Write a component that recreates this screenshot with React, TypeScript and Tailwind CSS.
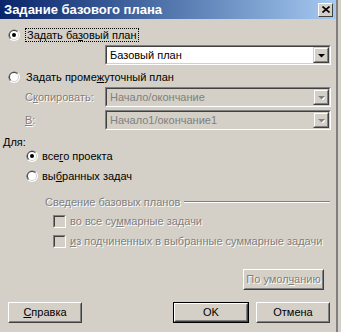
import React from "react";

function Radio({ checked }: { checked?: boolean }) {
  return (
    <svg width="12" height="12" viewBox="0 0 12 12" className="shrink-0">
      <circle cx="6" cy="6" r="6" fill="#ffffff" />
      <path d="M1.76 10.24 A6 6 0 0 1 10.24 1.76 Z" fill="#808080" />
      <circle cx="6" cy="6" r="5" fill="#d4d0c8" />
      <path d="M2.46 9.54 A5 5 0 0 1 9.54 2.46 Z" fill="#404040" />
      <circle cx="6" cy="6" r="4" fill="#ffffff" />
      {checked && <circle cx="6" cy="6" r="2" fill="#000000" />}
    </svg>
  );
}

function Checkbox() {
  return (
    <span className="block w-[13px] h-[13px] shrink-0 border border-t-[#808080] border-l-[#808080] border-b-white border-r-white">
      <span className="block w-full h-full border border-t-[#404040] border-l-[#404040] border-b-[#d4d0c8] border-r-[#d4d0c8] bg-[#d4d0c8]" />
    </span>
  );
}

function Combo({ value, disabled }: { value: string; disabled?: boolean }) {
  return (
    <div className="w-[226px] h-[20px] shrink-0 border border-t-[#808080] border-l-[#808080] border-b-white border-r-white">
      <div
        className={`flex h-full border border-t-[#404040] border-l-[#404040] border-b-[#d4d0c8] border-r-[#d4d0c8] ${
          disabled ? "bg-[#d4d0c8] text-[#808080]" : "bg-white text-black"
        }`}
      >
        <div className="flex-1 flex items-center pl-[3px] leading-none">{value}</div>
        <div className="w-[16px] h-full border border-t-[#d4d0c8] border-l-[#d4d0c8] border-b-[#404040] border-r-[#404040]">
          <div className="flex items-center justify-center h-full border border-t-white border-l-white border-b-[#808080] border-r-[#808080] bg-[#d4d0c8]">
            <svg width="8" height="5" viewBox="0 0 8 5">
              {disabled && <path d="M2 2 H9 L5.5 5.5 Z" fill="#ffffff" />}
              <path d="M1 1 H8 L4.5 4.5 Z" fill={disabled ? "#808080" : "#000000"} />
            </svg>
          </div>
        </div>
      </div>
    </div>
  );
}

function Button({
  children,
  width,
  isDefault,
  disabled,
}: {
  children: React.ReactNode;
  width: string;
  isDefault?: boolean;
  disabled?: boolean;
}) {
  return (
    <div className={`${width} h-[21px] shrink-0 ${isDefault ? "border border-black" : ""}`}>
      <div className="h-full border border-t-white border-l-white border-b-[#404040] border-r-[#404040]">
        <div
          className={`flex items-center justify-center h-full border border-t-[#d4d0c8] border-l-[#d4d0c8] border-b-[#808080] border-r-[#808080] bg-[#d4d0c8] ${
            disabled ? "text-[#808080] [text-shadow:1px_1px_0_#ffffff]" : "text-black"
          }`}
        >
          {children}
        </div>
      </div>
    </div>
  );
}

const dim = "text-[#808080] [text-shadow:1px_1px_0_#ffffff]";

export default function App() {
  return (
    <div className="w-[341px] h-[332px] bg-[#d4d0c8] overflow-hidden font-['Liberation_Sans',Arial,sans-serif] text-[11px] text-black whitespace-nowrap">
      <div className="w-[338px] h-full border-r-2 border-r-[#808080] flex flex-col">
        {/* Title bar */}
        <div className="h-[19px] flex items-center justify-between pl-[4px] pr-[3px] bg-gradient-to-r from-[#0a246a] to-[#a6caf0]">
          <span className="text-white font-bold text-[13px] leading-none">Задание базового плана</span>
          <div className="w-[15px] h-[14px] border border-t-white border-l-white border-b-[#404040] border-r-[#404040] bg-[#d4d0c8] flex items-center justify-center">
            <svg width="8" height="7" viewBox="0 0 8 7">
              <path d="M0.5 0.5 L7.5 6.5 M7.5 0.5 L0.5 6.5" stroke="#000" strokeWidth="1.6" />
            </svg>
          </div>
        </div>

        {/* Body */}
        <div className="flex flex-col">
          <div className="mt-[9px] h-[14px] flex items-center pl-[8px] gap-[5px]">
            <Radio checked />
            <span className="border border-dotted border-black px-[1px] leading-[12px]">
              Задать ба<u>з</u>овый план
            </span>
          </div>
          <div className="mt-[3px] pl-[105px]">
            <Combo value="Базовый план" />
          </div>

          <div className="mt-[5px] h-[14px] flex items-center pl-[8px] gap-[6px]">
            <Radio />
            <span>
              Задать проме<u>ж</u>уточный план
            </span>
          </div>
          <div className="mt-[3px] flex items-center pl-[25px]">
            <span className={`w-[80px] ${dim}`}>
              С<u>к</u>опировать:
            </span>
            <Combo value="Начало/окончание" disabled />
          </div>
          <div className="mt-[3px] flex items-center pl-[25px]">
            <span className={`w-[80px] ${dim}`}>
              <u>В</u>:
            </span>
            <Combo value="Начало1/окончание1" disabled />
          </div>

          <div className="mt-[5px] h-[14px] flex items-center pl-[3px]">Для:</div>
          <div className="h-[14px] flex items-center pl-[26px] gap-[4px]">
            <Radio checked />
            <span>
              все<u>г</u>о проекта
            </span>
          </div>
          <div className="mt-[6px] h-[14px] flex items-center pl-[26px] gap-[4px]">
            <Radio />
            <span>
              вы<u>б</u>ранных задач
            </span>
          </div>

          <div className="mt-[12px] h-[14px] flex items-center pl-[45px] pr-[6px] gap-[4px]">
            <span className={dim}>Сведение базовых планов</span>
            <div className="flex-1 border-t border-t-[#808080] border-b border-b-white" />
          </div>
          <div className="mt-[5px] h-[14px] flex items-center pl-[53px] gap-[4px]">
            <Checkbox />
            <span className={dim}>
              во все су<u>м</u>марные задачи
            </span>
          </div>
          <div className="mt-[6px] h-[14px] flex items-center pl-[53px] gap-[4px]">
            <Checkbox />
            <span className={dim}>
              <u>и</u>з подчиненных в выбранные суммарные задачи
            </span>
          </div>

          <div className="mt-[21px] flex justify-end pr-[12px]">
            <Button width="w-[81px]" disabled>
              <span>
                По умол<u>ч</u>анию
              </span>
            </Button>
          </div>

          <div className="mt-[12px] flex items-center pl-[8px] pr-[6px]">
            <Button width="w-[74px]">
              <span>
                <u>С</u>правка
              </span>
            </Button>
            <div className="flex-1" />
            <div className="flex gap-[7px]">
              <Button width="w-[76px]" isDefault>
                OK
              </Button>
              <Button width="w-[74px]">Отмена</Button>
            </div>
          </div>
        </div>
      </div>
    </div>
  );
}
